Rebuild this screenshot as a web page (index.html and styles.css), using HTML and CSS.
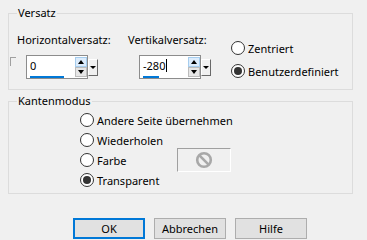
FILE: index.html
```html
<!DOCTYPE html>
<html lang="de">
<head>
    <meta charset="UTF-8">
    <title>Versatz</title>
    <link rel="stylesheet" href="styles.css">
</head>
<body>
    <fieldset class="group offset">
        <legend>Versatz</legend>
        <div class="offset-row">
            <div class="field field-h">
                <label class="field-label">Horizontalversatz:</label>
                <div class="field-line">
                    <span class="check"></span>
                    <div class="spin">
                        <div class="spin-box">
                            <div class="spin-value"><span class="spin-text wide">0</span></div>
                            <div class="spin-arrows">
                                <span class="arrow-btn up"><i class="tri-up"></i></span>
                                <span class="arrow-btn"><i class="tri-down"></i></span>
                            </div>
                        </div>
                        <div class="spin-drop"><i class="tri-small"></i></div>
                    </div>
                </div>
            </div>
            <div class="field field-v">
                <label class="field-label">Vertikalversatz:</label>
                <div class="field-line">
                    <div class="spin">
                        <div class="spin-box">
                            <div class="spin-value"><span class="spin-text short">-280<span class="caret"></span></span></div>
                            <div class="spin-arrows">
                                <span class="arrow-btn up"><i class="tri-up"></i></span>
                                <span class="arrow-btn"><i class="tri-down"></i></span>
                            </div>
                        </div>
                        <div class="spin-drop"><i class="tri-small"></i></div>
                    </div>
                </div>
            </div>
            <div class="radios">
                <label class="radio"><span class="radio-dot"></span>Zentriert</label>
                <label class="radio on"><span class="radio-dot"></span>Benutzerdefiniert</label>
            </div>
        </div>
    </fieldset>

    <fieldset class="group edge">
        <legend>Kantenmodus</legend>
        <div class="edge-rows">
            <label class="radio"><span class="radio-dot"></span>Andere Seite übernehmen</label>
            <label class="radio"><span class="radio-dot"></span>Wiederholen</label>
            <div class="edge-row">
                <label class="radio"><span class="radio-dot"></span>Farbe</label>
                <span class="swatch">
                    <svg width="18" height="18" viewBox="0 0 18 18">
                        <circle cx="9" cy="9" r="6.8" fill="none" stroke="#a8a8a8" stroke-width="2.6"/>
                        <line x1="4.4" y1="4.4" x2="13.6" y2="13.6" stroke="#a8a8a8" stroke-width="2.6"/>
                    </svg>
                </span>
            </div>
            <label class="radio on"><span class="radio-dot"></span>Transparent</label>
        </div>
    </fieldset>

    <div class="buttons">
        <button class="default">OK</button>
        <button>Abbrechen</button>
        <button>Hilfe</button>
    </div>
</body>
</html>
```

FILE: styles.css
```css
body {
    margin: 0;
    width: 367px;
    height: 240px;
    overflow: hidden;
    background: #f0f0f0;
    color: #000;
    font-family: "Noto Sans", "Liberation Sans", sans-serif;
    font-size: 11px;
}
.group {
    margin: 0 14px 0 8px;
    min-width: 0;
    border: 1px solid #dcdcdc;
}
.group legend {
    margin-left: 7px;
    padding: 0 1px;
    line-height: 16px;
}
.offset {
    margin-top: 5px;
    padding: 11px 0 10px 1px;
}
.offset-row {
    display: flex;
}
.field-label {
    display: block;
    margin-left: 7px;
    line-height: 16px;
}
.field-h {
    width: 118px;
}
.field-v {
    width: 103px;
}
.field-v .field-label {
    margin-left: 0;
}
.field-v .spin {
    margin-left: 11px;
}
.field-line {
    display: flex;
    align-items: flex-start;
    margin-top: 7px;
}
.check {
    width: 5px;
    height: 8px;
    margin: 2px 10px 0 0;
    border-top: 1px solid #a0a0a0;
    border-left: 1px solid #a0a0a0;
}
.spin {
    display: flex;
    align-items: flex-start;
}
.spin-box {
    display: flex;
    width: 62px;
    height: 24px;
    box-sizing: border-box;
    border: 1px solid #8c8c8c;
    background: #fff;
}
.spin-value {
    flex: 1;
    padding: 2px 0 0 3px;
}
.spin-text {
    display: block;
    line-height: 16px;
    padding-bottom: 2px;
    border-bottom: 2px solid #0078d7;
}
.spin-text.wide {
    width: 34px;
}
.spin-text.short {
    width: 16px;
    white-space: nowrap;
}
.caret {
    display: inline-block;
    width: 1px;
    height: 13px;
    margin-left: 1px;
    background: #000;
    vertical-align: -2px;
}
.spin-arrows {
    display: flex;
    flex-direction: column;
    width: 12px;
    margin-top: 1px;
}
.arrow-btn {
    display: flex;
    align-items: center;
    justify-content: center;
    height: 10px;
    box-sizing: border-box;
    border: 1px solid #bcbcbc;
    background: #e6e6e6;
}
.arrow-btn.up {
    border-color: #a6cdee;
    background: #dcecfc;
}
.tri-up {
    border-left: 3.5px solid transparent;
    border-right: 3.5px solid transparent;
    border-bottom: 4px solid #000;
}
.tri-down {
    border-left: 3.5px solid transparent;
    border-right: 3.5px solid transparent;
    border-top: 4px solid #000;
}
.spin-drop {
    display: flex;
    align-items: center;
    justify-content: center;
    width: 10px;
    height: 17px;
    margin-top: 4px;
    box-sizing: border-box;
    border: 1px solid;
    border-color: #fff #696969 #696969 #fff;
    background: #f0f0f0;
}
.tri-small {
    border-left: 3px solid transparent;
    border-right: 3px solid transparent;
    border-top: 3px solid #000;
}
.radios {
    display: flex;
    flex-direction: column;
    gap: 7px;
    margin-top: 8px;
}
.radio {
    display: flex;
    align-items: center;
    height: 16px;
    white-space: nowrap;
}
.radio-dot {
    display: flex;
    align-items: center;
    justify-content: center;
    flex-shrink: 0;
    width: 14px;
    height: 14px;
    margin-right: 3px;
    box-sizing: border-box;
    border: 1px solid #333;
    border-radius: 50%;
    background: #fff;
}
.radio.on .radio-dot::after {
    content: "";
    width: 8px;
    height: 8px;
    border-radius: 50%;
    background: #333;
}
.edge {
    margin-top: 3px;
    padding: 1px 0 3px 1px;
}
.edge-rows {
    display: flex;
    flex-direction: column;
    margin-left: 70px;
}
.edge .radio {
    height: 20px;
}
.edge-row {
    display: flex;
    align-items: center;
}
.edge-row .radio {
    width: 97px;
}
.swatch {
    display: flex;
    align-items: center;
    justify-content: center;
    width: 54px;
    height: 24px;
    margin: -2px 0;
    box-sizing: border-box;
    border: 1px solid;
    border-color: #a0a0a0 #fff #fff #a0a0a0;
    background: #f0f0f0;
}
.buttons {
    display: flex;
    gap: 9px;
    margin: 24px 0 0 73px;
}
button {
    width: 72px;
    height: 21px;
    padding: 0;
    box-sizing: border-box;
    border: 1px solid #adadad;
    background: #e1e1e1;
    color: #000;
    font-family: inherit;
    font-size: 11px;
}
button.default {
    border: 2px solid #0078d7;
}
```
